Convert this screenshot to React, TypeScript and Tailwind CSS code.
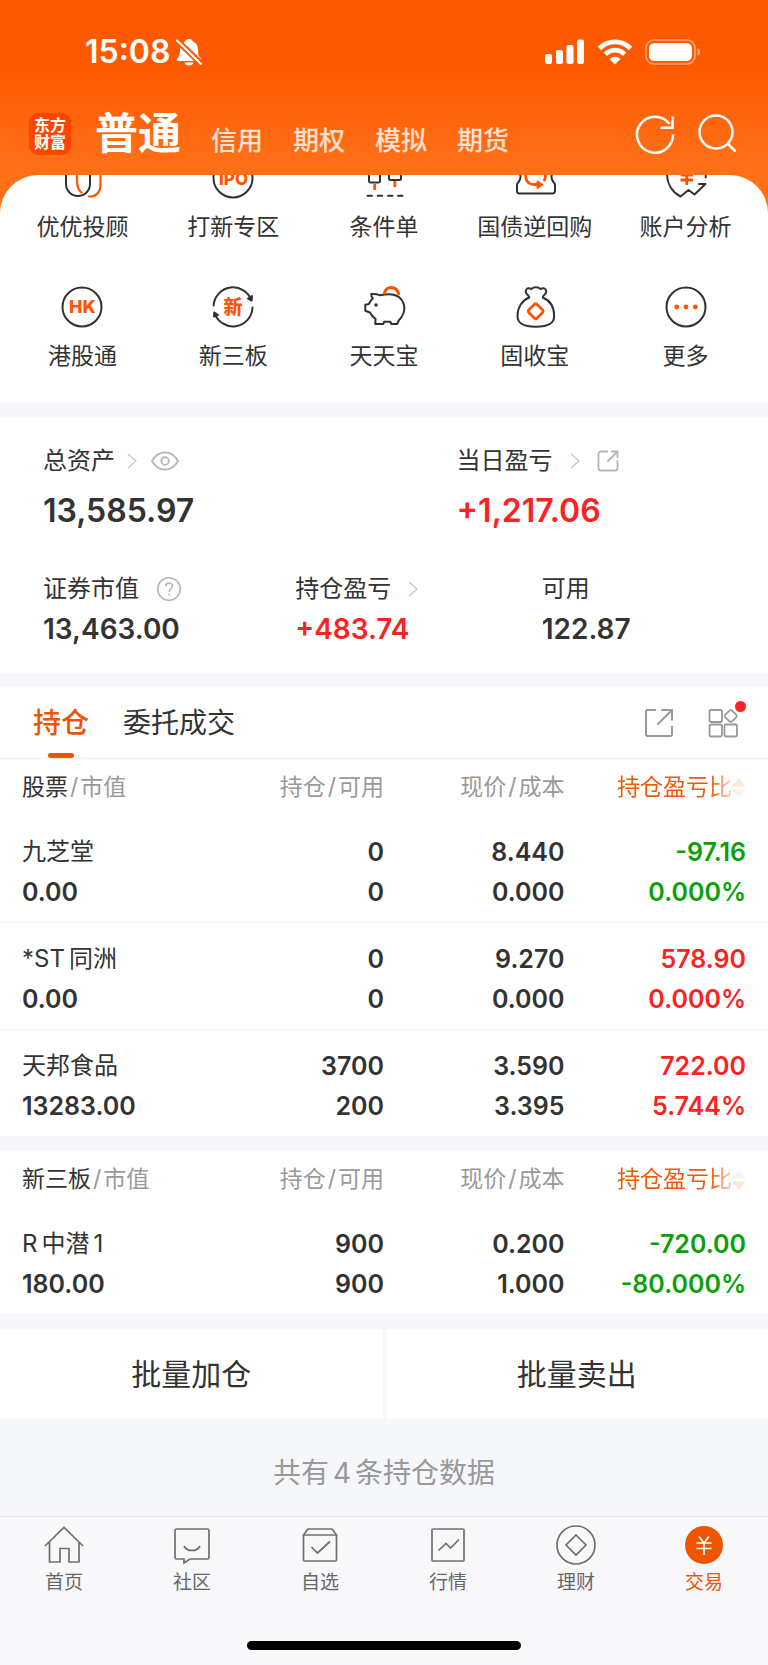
import type { ReactNode } from "react";
import clsx from "clsx";

type Holding = {
  name: ReactNode;
  value: string;
  qty: string;
  usable: string;
  price: string;
  cost: string;
  profit: string;
  ratio: string;
  up: boolean;
};

const stocks: Holding[] = [
  { name: "九芝堂", value: "0.00", qty: "0", usable: "0", price: "8.440", cost: "0.000", profit: "-97.16", ratio: "0.000%", up: false },
  {
    name: (
      <>
        <span className="mr-1">*ST</span>同洲
      </>
    ),
    value: "0.00",
    qty: "0",
    usable: "0",
    price: "9.270",
    cost: "0.000",
    profit: "578.90",
    ratio: "0.000%",
    up: true,
  },
  { name: "天邦食品", value: "13283.00", qty: "3700", usable: "200", price: "3.590", cost: "3.395", profit: "722.00", ratio: "5.744%", up: true },
];

const neeq: Holding[] = [
  {
    name: (
      <>
        <span className="mr-1">R</span>中潜<span className="ml-1">1</span>
      </>
    ),
    value: "180.00",
    qty: "900",
    usable: "900",
    price: "0.200",
    cost: "1.000",
    profit: "-720.00",
    ratio: "-80.000%",
    up: false,
  },
];

const DARK = "#2f3133";
const ORANGE = "#ff5500";

function ToolIcon({ children }: { children: ReactNode }) {
  return (
    <svg viewBox="0 0 44 44" className="size-11" fill="none" stroke={DARK} strokeWidth="2" strokeLinecap="round" strokeLinejoin="round">
      {children}
    </svg>
  );
}

const tools: { label: string; icon: ReactNode }[] = [
  {
    label: "优优投顾",
    icon: (
      <ToolIcon>
        <path d="M6 0v28a12 12 0 0 0 24 0V0" />
        <path d="M17 0v24c0 6 1 10 4.500 12.700M40.500 0v28c0 8-4 12.500-11.500 12.500" stroke={ORANGE} strokeWidth="2.200" />
      </ToolIcon>
    ),
  },
  {
    label: "打新专区",
    icon: (
      <ToolIcon>
        <circle cx="22" cy="22" r="19.500" />
        <text x="22.500" y="29" textAnchor="middle" fontSize="17" fontWeight="800" fill={ORANGE} stroke="none">
          IPO
        </text>
      </ToolIcon>
    ),
  },
  {
    label: "条件单",
    icon: (
      <ToolIcon>
        <path d="M7 10h11v15a1.500 1.500 0 0 1-1.500 1.500h-8A1.500 1.500 0 0 1 7 25ZM27 8h12v14.500a1.500 1.500 0 0 1-1.500 1.500h-9a1.500 1.500 0 0 1-1.500-1.500Z" />
        <path d="M12.700 28v6M32.800 25v6" stroke={ORANGE} strokeWidth="2.800" strokeLinecap="butt" />
        <path d="M5.500 39.700h4.500M15.700 39.700h4.500M26 39.700h4.500M36 39.700h4.500" />
      </ToolIcon>
    ),
  },
  {
    label: "国债逆回购",
    icon: (
      <ToolIcon>
        <path d="M6 8v8c2 3.500 2 7-.5 10q-1.500 1.500-1.500 3v6a2.500 2.500 0 0 0 2.500 2.500h33a2.500 2.500 0 0 0 2.500-2.500V29q0-1.500-1.500-3c-2.500-3-2.500-6.500-.5-10V8" />
        <path d="M13 17.500c-1.500 6 2 11 8 11h4M31.500 24c1.500-3 1-6-1-8" stroke={ORANGE} strokeWidth="2.800" />
        <path d="m24.500 25.500 4.500 3-4.500 3.500Z" fill={ORANGE} stroke={ORANGE} />
      </ToolIcon>
    ),
  },
  {
    label: "账户分析",
    icon: (
      <ToolIcon>
        <path d="M3 14c-1 13 5 22 13.500 26.500l8-6.500 6 4.500L41.500 28H35M41.700 15v6.500" />
        <path d="M22.700 14v15M16.500 24h12.500M16.500 19h12.500" stroke={ORANGE} strokeWidth="2.800" strokeLinecap="butt" />
      </ToolIcon>
    ),
  },
  {
    label: "港股通",
    icon: (
      <ToolIcon>
        <circle cx="22" cy="22" r="19.500" />
        <text x="22.300" y="28.300" textAnchor="middle" fontSize="18" fontWeight="800" fill={ORANGE} stroke="none">
          HK
        </text>
      </ToolIcon>
    ),
  },
  {
    label: "新三板",
    icon: (
      <ToolIcon>
        <path d="M2.600 20.500A19.500 19.500 0 0 1 40.300 15M41.500 22.500A19.500 19.500 0 0 1 3.500 28" />
        <path d="m41 11-.3 4.500-3.700-2ZM3 31.500l.3-4 3.700 2.500Z" fill={DARK} />
        <text x="22" y="29" textAnchor="middle" fontSize="19" fontWeight="800" fill={ORANGE} stroke="none">
          新
        </text>
      </ToolIcon>
    ),
  },
  {
    label: "天天宝",
    icon: (
      <ToolIcon>
        <path d="M17.500 10.200C15 9 12 8.700 9.200 9c0 2 .6 3.500 1.600 4.500-1.800 1.500-3 3.500-4 5.500l-3.500.8v6l4.700 1.700c1.500 3 3 4.800 5.500 6.300L13.300 39h8l.9-2.300h6.200l.8 2.300h6c.5-2.500 2-4.500 4-6.500C45.500 24 42 11 30 9.500c-4.500-.5-8.500.1-12.500.7Z" />
        <circle cx="14" cy="20" r="1.800" fill={DARK} stroke="none" />
        <path d="M22.500 8c2-7.500 11.500-7.500 14.200.8" stroke={ORANGE} strokeWidth="3" />
      </ToolIcon>
    ),
  },
  {
    label: "固收宝",
    icon: (
      <ToolIcon>
        <path d="M16.300 12.500C9 15.500 4.500 22.500 4.500 31c0 7.500 5.500 10.700 18.300 10.700S41.200 38.500 41.200 31C41.200 22.500 37 15.500 29.700 12.500c.5-2 1.800-2.700 3.300-4.500.8-2-.3-4.700-2.700-4.700-1.200 0-2 .2-3 .7-1.700-2.400-7-2.400-8.700 0-1-.5-1.800-.7-3-.7-2.400 0-3.500 2.700-2.600 4.700 1.400 1.800 2.800 2.500 3.300 4.500Z" />
        <rect x="17" y="20.500" width="11.500" height="11.500" rx="2" transform="rotate(45 22.700 26.200)" stroke={ORANGE} strokeWidth="2.800" />
      </ToolIcon>
    ),
  },
  {
    label: "更多",
    icon: (
      <ToolIcon>
        <circle cx="22" cy="22" r="19.500" />
        <g fill={ORANGE} stroke="none">
          <circle cx="12.700" cy="22" r="2.400" />
          <circle cx="22" cy="22" r="2.400" />
          <circle cx="31.300" cy="22" r="2.400" />
        </g>
      </ToolIcon>
    ),
  },
];

const tabs: { label: string; active?: boolean; icon: ReactNode }[] = [
  { label: "首页", icon: <path d="m1 21 19-18.500L39 21M5.500 17v20H16V23.500h9V37h10V17" /> },
  {
    label: "社区",
    icon: (
      <>
        <path d="M4.500 4h31A1.500 1.500 0 0 1 37 5.500v27a1.500 1.500 0 0 1-1.500 1.500H18l-6 4v-4H4.500A1.500 1.500 0 0 1 3 32.500v-27A1.500 1.500 0 0 1 4.500 4Z" />
        <path d="M12 21c3 6 13 6 16 0" />
      </>
    ),
  },
  {
    label: "自选",
    icon: (
      <>
        <path d="M3.500 10h33v24.500A1.500 1.500 0 0 1 35 36H5a1.500 1.500 0 0 1-1.500-1.500ZM3.500 10l4.500-6h24l4.500 6" />
        <path d="m11.500 22 6 6L30 16.500" />
      </>
    ),
  },
  {
    label: "行情",
    icon: (
      <>
        <rect x="4" y="4" width="32" height="32" rx="1" />
        <path d="m10.500 25.500 7.500-7 4.500 4.500 8.500-8.500" />
      </>
    ),
  },
  {
    label: "理财",
    icon: (
      <>
        <circle cx="20" cy="20" r="19" />
        <path d="m20 10 10 10-10 10-10-10Z" />
      </>
    ),
  },
  {
    label: "交易",
    active: true,
    icon: (
      <>
        <circle cx="20" cy="20" r="19" fill="#ee5500" stroke="none" />
        <path d="m15 11.500 5 6.500 5-6.500M20 18v12M12.500 18h15M12.500 23.500h15" stroke="#fff" />
      </>
    ),
  },
];

function Chevron() {
  return (
    <svg viewBox="0 0 10 16" className="h-4 w-[10px]" fill="none" stroke="#c8c8c8" strokeWidth="1.500">
      <path d="m1 1 8 7-8 7" />
    </svg>
  );
}

function StatusBar() {
  return (
    <div className="flex h-8 items-center justify-between pr-[67px] pl-[85px] text-white">
      <div className="flex items-center gap-[6px]">
        <span className="text-[32px] leading-8 font-semibold">15:08</span>
        <svg viewBox="0 0 26 28" className="h-7 w-[26px]" fill="currentColor">
          <path d="M13 1c2.300 0 3.500 1.200 3.800 2.500C20.500 5 22 8 22 12c0 5 .8 6.500 3 8.500.5 1 .2 2.500-1.500 2.500h-21C.8 23 .5 21.500 1 20.500 3.200 18.500 4 17 4 12c0-4 1.500-7 5.200-8.500C9.500 2.200 10.700 1 13 1ZM8.500 24.500h9c-.5 2-2.200 3-4.500 3s-4-1-4.500-3Z" />
          <path d="m0 1.500 26 25" stroke="#ff5a02" strokeWidth="6" />
          <path d="m1 2.500 24 23.500" stroke="currentColor" strokeWidth="2" strokeLinecap="round" />
        </svg>
      </div>
      <div className="flex items-center gap-3">
        <svg viewBox="0 0 40 26" className="h-[26px] w-10" fill="currentColor">
          <rect x="0" y="15" width="7" height="10" rx="2" />
          <rect x="11" y="11" width="7" height="14" rx="2" />
          <rect x="21.500" y="6" width="7" height="19" rx="2" />
          <rect x="32" y="0.500" width="7" height="24.500" rx="2" />
        </svg>
        <svg viewBox="0 0 36 26" className="h-[26px] w-9" fill="none" stroke="currentColor" strokeWidth="4.800">
          <path d="M2.500 9.500c8.500-8.800 22.500-8.800 31 0M8.300 15.200c5.400-5.400 14-5.400 19.400 0" />
          <path d="M18 25.500 12.500 20q5.500-4.500 11 0Z" fill="currentColor" stroke="none" />
        </svg>
        <svg viewBox="0 0 56 26" className="h-[26px] w-14" fill="currentColor">
          <rect x="1" y="1" width="49" height="24" rx="8" fill="none" stroke="currentColor" strokeWidth="1.600" opacity="0.450" />
          <rect x="4" y="4" width="43" height="18" rx="5.500" />
          <path d="M52.500 9c3.500 1.500 3.500 6.500 0 8Z" opacity="0.500" />
        </svg>
      </div>
    </div>
  );
}

function Header() {
  return (
    <header className="bg-[linear-gradient(#ff5900_0px,#ff5900_70px,#ff6f18_160px)] pt-9 pb-5">
      <StatusBar />
      <div className="mt-[43px] flex items-end pr-[30px] pl-[29px]">
        <div className="grid size-[42px] place-content-center rounded-[9px] bg-[#ff4400] text-center text-[16px] leading-[17px] font-bold text-white">
          <span>东方</span>
          <span>财富</span>
        </div>
        <nav className="ml-6 flex items-end gap-[30px]">
          <button type="button" className="text-[43px] leading-[44px] font-bold text-white">
            普通
          </button>
          {["信用", "期权", "模拟", "期货"].map((t) => (
            <button key={t} type="button" className="text-[26px] leading-7 font-medium text-white/80">
              {t}
            </button>
          ))}
        </nav>
        <div className="ml-auto flex gap-5 text-white">
          <button type="button" aria-label="刷新">
            <svg viewBox="0 0 42 42" className="size-[42px]" fill="none" stroke="currentColor" strokeWidth="2.500">
              <path d="M39 21.500A18 18 0 1 1 35.500 11" />
              <path d="M38.500 3.500v11.200h-12" />
            </svg>
          </button>
          <button type="button" aria-label="搜索">
            <svg viewBox="0 0 42 42" className="size-[42px]" fill="none" stroke="currentColor" strokeWidth="2.500">
              <circle cx="20" cy="19" r="16.500" />
              <path d="m31 30 8.500 8.500" />
            </svg>
          </button>
        </div>
      </div>
    </header>
  );
}

function Assets() {
  const label = "flex items-center text-[24px] leading-8";
  return (
    <section className="bg-white pt-7 pb-6 pl-[43px]">
      <div className="grid grid-cols-[413fr_311fr]">
        <div>
          <div className={label}>
            总资产
            <span className="mr-[14px] ml-3">
              <Chevron />
            </span>
            <button type="button" aria-label="隐藏金额">
              <svg viewBox="0 0 28 20" className="h-5 w-7" fill="none" stroke="#b5b5b5" strokeWidth="1.800">
                <path d="M1 10C7.500-1.500 20.500-1.500 27 10 20.500 21.500 7.500 21.500 1 10Z" />
                <circle cx="14" cy="10" r="3.800" />
              </svg>
            </button>
          </div>
          <p className="mt-[14px] text-[32px] leading-10 font-semibold">13,585.97</p>
        </div>
        <div>
          <div className={label}>
            当日盈亏
            <span className="mr-[17px] ml-[17px]">
              <Chevron />
            </span>
            <button type="button" aria-label="分享盈亏">
              <svg viewBox="0 0 22 22" className="size-[22px]" fill="none" stroke="#b5b5b5" strokeWidth="1.800">
                <path d="M11 1.500H4A2.500 2.500 0 0 0 1.500 4v14A2.500 2.500 0 0 0 4 20.500h14a2.500 2.500 0 0 0 2.500-2.500v-7.500M14 1.500h6.500V8M20.500 1.500 10.500 11.500" />
              </svg>
            </button>
          </div>
          <p className="mt-[14px] text-[32px] leading-10 font-semibold text-[#fa2222]">+1,217.06</p>
        </div>
      </div>
      <div className="mt-[42px] grid grid-cols-[252fr_246fr_226fr]">
        <div>
          <div className={label}>
            证券市值
            <button type="button" aria-label="说明" className="ml-[17px]">
              <svg viewBox="0 0 26 26" className="size-[26px]" fill="none" stroke="#b5b5b5" strokeWidth="1.600">
                <circle cx="13" cy="13" r="11.300" />
                <path d="M9.800 10.500c0-4.600 6.700-4.500 6.700-.4 0 2.600-3.300 2.800-3.300 5.900M13.200 17.500v2" />
              </svg>
            </button>
          </div>
          <p className="mt-1 text-[28px] leading-10 font-semibold">13,463.00</p>
        </div>
        <div>
          <div className={label}>
            持仓盈亏
            <span className="ml-[17px]">
              <Chevron />
            </span>
          </div>
          <p className="mt-1 text-[28px] leading-10 font-semibold text-[#fa2222]">+483.74</p>
        </div>
        <div>
          <div className={label}>可用</div>
          <p className="mt-1 text-[28px] leading-10 font-semibold">122.87</p>
        </div>
      </div>
    </section>
  );
}

function HoldingTable({ title, rows, asc }: { title: string; rows: Holding[]; asc: boolean }) {
  const slash = <span className="mx-[2px]">/</span>;
  return (
    <table className="w-full table-fixed border-collapse bg-white">
      <colgroup>
        <col className="w-[28%]" />
        <col className="w-[22%]" />
        <col className="w-[23.500%]" />
        <col />
      </colgroup>
      <thead>
        <tr className="h-[57px] text-right text-[23px] text-[#999]">
          <th className="pl-[22px] text-left font-normal whitespace-nowrap">
            <span className="text-[#333]">{title}</span>
            {slash}市值
          </th>
          <th className="font-normal">持仓{slash}可用</th>
          <th className="font-normal">现价{slash}成本</th>
          <th className="pr-[22px] font-normal">
            <button
              type="button"
              className="inline-flex items-center text-[#f05a0a] [mask-image:linear-gradient(to_right,#000_72%,rgba(0,0,0,0.15)_92%)]"
            >
              持仓盈亏比
              <svg viewBox="0 0 14 20" className="h-5 w-[14px]">
                <path d="m7 0 7 8.500H0Z" fill={asc ? "#f05a0a" : "#bbb"} />
                <path d="m7 20 7-8.500H0Z" fill={asc ? "#bbb" : "#f05a0a"} />
              </svg>
            </button>
          </th>
        </tr>
      </thead>
      <tbody>
        {rows.map((r, i) => (
          <tr
            key={i}
            className="border-b border-[#f1f2f4] text-right text-[25px] leading-10 font-semibold last:border-b-0 [&>td]:pt-4 [&>td]:pb-[10px]"
          >
            <td className="pl-[22px] text-left">
              <div className="text-[24px] font-normal">{r.name}</div>
              <div>{r.value}</div>
            </td>
            <td>
              <div>{r.qty}</div>
              <div>{r.usable}</div>
            </td>
            <td>
              <div>{r.price}</div>
              <div>{r.cost}</div>
            </td>
            <td className={clsx("pr-[22px]", r.up ? "text-[#fa2222]" : "text-[#0aa00a]")}>
              <div>{r.profit}</div>
              <div>{r.ratio}</div>
            </td>
          </tr>
        ))}
      </tbody>
    </table>
  );
}

export default function App() {
  return (
    <div className="min-h-screen bg-[#f6f7fa] font-['Inter','Noto_Sans_CJK_SC',sans-serif] text-[#333]">
      <Header />

      <div className="bg-[#ff6f18]">
        <section className="overflow-hidden rounded-t-[38px] bg-white px-[7px] pb-[33px]">
          <div className="-mt-[19px] grid grid-cols-5 gap-y-11">
            {tools.map((t) => (
              <button key={t.label} type="button" className="flex flex-col items-center gap-[13px] text-[23px] leading-7 whitespace-nowrap">
                {t.icon}
                {t.label}
              </button>
            ))}
          </div>
        </section>
      </div>

      <main className="mt-[14px]">
        <Assets />

        <div className="mt-[14px] flex h-[72px] items-center border-b border-[#eff0f2] bg-white pr-[30px] pl-[33px] text-[28px]">
          <button type="button" className="relative h-full font-medium text-[#ee5500]">
            持仓
            <span className="absolute bottom-0 left-1/2 h-[5px] w-[26px] -translate-x-1/2 rounded-full bg-[#ee5500]" />
          </button>
          <button type="button" className="ml-[34px] h-full">
            委托成交
          </button>
          <button type="button" aria-label="分享" className="mr-[34px] ml-auto">
            <svg viewBox="0 0 30 30" className="size-[30px]" fill="none" stroke="#999" strokeWidth="2">
              <path d="M12 2H3.500A1.500 1.500 0 0 0 2 3.500v23A1.500 1.500 0 0 0 3.500 28h23a1.500 1.500 0 0 0 1.500-1.500V18M17.500 2H28v10.500M28 2 13.500 16.500" />
            </svg>
          </button>
          <button type="button" aria-label="更多功能" className="relative">
            <svg viewBox="0 0 30 30" className="size-[30px]" fill="none" stroke="#999" strokeWidth="1.800">
              <rect x="1.500" y="2" width="12.500" height="12" rx="1.500" />
              <rect x="1.500" y="16.500" width="12.500" height="12" rx="1.500" />
              <rect x="16.500" y="16.500" width="12.500" height="12" rx="1.500" />
              <rect x="18" y="3.300" width="9.500" height="9.500" rx="2.500" transform="rotate(45 22.800 8)" />
            </svg>
            <span className="absolute -top-[7px] -right-2 size-[11px] rounded-full bg-[#fa2222]" />
          </button>
        </div>

        <HoldingTable title="股票" rows={stocks} asc />
        <div className="mt-[15px]">
          <HoldingTable title="新三板" rows={neeq} asc={false} />
        </div>

        <div className="mt-[15px] grid grid-cols-2 gap-[3px] text-[30px]">
          <button type="button" className="h-[90px] bg-white">
            批量加仓
          </button>
          <button type="button" className="h-[90px] bg-white">
            批量卖出
          </button>
        </div>

        <p className="pt-[34px] pb-[23px] text-center text-[28px] leading-10 text-[#999]">
          共有<span className="mx-1">4</span>条持仓数据
        </p>
      </main>

      <footer className="border-t border-[#e8e9eb] bg-[#f8f8fb] pt-2 pb-[15px]">
        <nav className="grid grid-cols-6">
          {tabs.map((t) => (
            <a
              key={t.label}
              href="#"
              className={clsx("flex flex-col items-center gap-1 text-[19px] leading-7", t.active ? "text-[#ee5500]" : "text-[#666]")}
            >
              <svg viewBox="0 0 40 40" className="size-10" fill="none" stroke="#707070" strokeWidth="1.700">
                {t.icon}
              </svg>
              {t.label}
            </a>
          ))}
        </nav>
        <div className="mx-auto mt-11 h-[9px] w-[274px] rounded-full bg-black" />
      </footer>
    </div>
  );
}
